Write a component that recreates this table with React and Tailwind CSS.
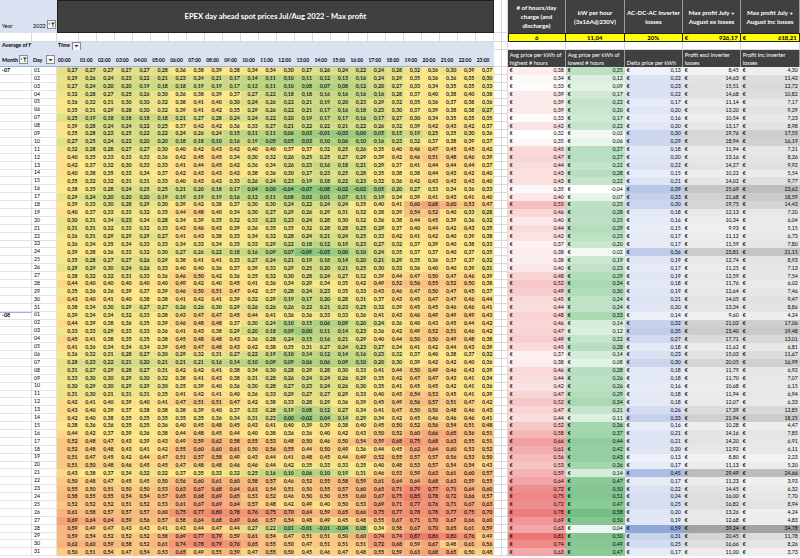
import React from 'react';

// hourly averages in euro cents, one line per day (Jul 01 .. Aug 31), 00:00 .. 23:00
const HOURS_RAW = `
27 27 27 27 27 28 36 38 39 38 34 34 30 27 26 24 22 24 28 32 36 30 39 37
29 26 24 23 22 21 23 24 21 17 14 11 10 11 12 13 16 24 29 35 36 36 35 30
27 24 20 20 19 18 18 19 19 17 13 11 10 8 7 8 12 20 27 33 34 35 35 33
32 28 27 25 26 30 36 38 39 37 27 22 18 18 16 16 16 16 28 37 40 38 40 38
36 32 31 30 30 32 38 41 40 30 24 26 22 21 19 20 23 29 32 35 36 37 38 36
35 31 29 28 30 32 39 41 42 35 29 26 22 21 17 16 18 23 30 37 39 38 38 27
25 19 18 18 18 18 21 27 28 24 24 22 20 19 17 17 16 17 27 30 34 35 35 35
39 28 24 24 22 25 37 42 42 36 33 27 21 22 22 21 22 26 32 39 42 43 42 37
35 28 23 25 22 22 24 26 24 15 11 11 6 3 -1 -3 0 5 15 19 25 35 30 36
27 25 24 22 20 20 18 18 10 16 19 5 5 3 10 6 10 16 23 32 37 38 39 37
32 28 28 27 27 30 40 42 43 42 40 40 37 37 32 25 26 35 40 46 47 45 45 42
40 35 33 33 33 36 42 45 45 34 30 32 26 25 25 27 29 39 42 46 51 48 46 39
42 37 32 30 33 33 41 44 45 42 36 34 26 23 16 18 21 29 37 41 44 44 44 37
40 38 35 33 34 37 42 43 43 42 38 36 30 27 23 25 28 35 38 38 44 43 42 40
35 32 32 31 31 33 40 43 42 33 26 24 23 19 18 22 23 32 36 42 43 43 43 40
38 35 28 24 25 25 21 20 18 17 4 0 -4 -7 -8 -2 -2 5 20 27 33 34 36 33
29 24 20 20 20 19 19 19 19 16 12 11 8 3 1 7 11 19 34 39 41 43 41 40
39 33 30 28 29 30 39 42 38 37 30 30 24 22 24 24 35 40 41 60 68 60 53 47
40 37 33 33 32 35 44 48 40 34 30 27 29 26 29 31 32 38 39 54 52 40 33 28
30 31 34 23 34 28 34 39 35 32 33 23 23 24 28 30 32 36 38 44 45 39 36 32
31 31 32 33 32 33 43 46 43 39 36 35 35 32 28 28 25 29 37 40 44 42 43 35
36 31 29 29 29 27 41 43 38 33 34 32 28 24 21 24 25 33 42 41 42 40 39 38
36 34 35 34 33 33 34 33 34 35 33 29 22 18 12 19 23 27 32 37 39 40 38 33
39 38 36 33 32 30 27 26 22 18 16 9 7 -9 -5 0 10 24 35 37 37 40 37 35
35 28 27 27 26 29 38 41 41 33 27 24 21 19 18 14 20 21 29 35 36 37 37 32
29 29 30 24 26 33 40 40 36 37 39 33 29 25 20 21 25 30 33 36 40 40 39 31
38 32 32 31 33 36 46 50 42 36 35 32 30 28 24 27 32 39 44 47 50 47 46 39
44 40 40 40 40 40 49 42 40 45 41 36 34 29 34 35 42 49 52 56 55 52 50 38
35 36 36 39 37 39 46 50 51 47 42 37 28 24 23 35 33 43 46 47 50 47 45 37
43 40 41 40 38 38 41 42 41 39 32 29 19 17 20 28 31 37 43 45 47 47 46 44
38 34 30 29 27 27 26 26 30 29 26 26 26 22 21 23 25 32 39 45 45 46 46 41
39 34 34 32 33 38 43 47 47 45 44 41 36 36 33 33 36 41 43 46 49 49 49 43
44 39 38 36 35 39 46 48 48 37 30 24 10 15 6 9 20 24 36 40 43 45 44 42
33 33 29 33 33 36 41 43 38 29 20 18 9 0 11 14 23 36 42 49 52 51 46 42
45 41 38 35 35 38 45 48 48 43 36 28 24 15 16 21 29 40 44 50 50 49 48 38
41 36 34 34 34 39 45 47 48 43 42 38 35 31 27 24 23 27 34 41 42 44 43 39
36 32 31 28 27 30 29 32 31 27 22 19 10 14 12 14 16 23 32 37 40 38 37 32
28 23 22 21 20 21 21 21 16 14 10 9 9 6 6 9 10 20 30 39 42 42 40 36
31 27 29 28 27 31 42 42 41 38 34 30 28 29 28 30 33 41 44 50 49 46 43 39
33 30 30 29 30 32 38 41 43 38 31 28 26 24 24 26 29 35 42 47 47 43 41 34
30 29 30 29 29 30 35 39 40 36 30 28 27 23 24 26 30 35 41 45 45 42 41 36
31 30 31 31 31 35 41 42 41 40 36 33 29 27 27 29 33 40 45 54 53 45 41 39
42 41 40 39 40 41 47 51 51 47 42 38 33 28 29 36 39 45 49 56 57 51 47 42
43 40 39 37 38 38 38 39 40 37 33 28 19 8 12 27 34 41 47 50 50 48 46 43
42 40 38 35 35 35 35 35 36 34 31 23 0 -2 4 14 29 34 42 45 46 46 46 41
38 36 36 35 35 36 40 45 48 45 43 41 40 39 39 38 40 45 50 52 56 54 51 48
44 42 37 39 36 38 44 48 45 44 40 38 36 36 40 42 43 50 52 60 66 65 56 51
52 48 47 43 39 43 49 59 62 58 55 53 48 50 46 50 54 59 68 75 68 63 55 51
52 48 48 43 41 42 55 60 60 61 50 56 55 44 50 49 36 44 45 62 64 60 53 52
51 47 45 42 44 47 51 57 58 49 43 44 41 48 45 44 49 52 55 57 57 56 53 50
51 50 48 46 45 45 47 48 48 46 46 44 42 35 33 33 35 40 48 53 57 54 54 43
43 38 37 34 32 32 37 35 33 32 25 16 10 6 10 19 31 46 53 59 63 61 60 57
50 48 47 45 45 50 56 60 61 60 58 57 46 52 55 58 59 61 64 64 68 63 59 55
55 50 51 50 50 53 63 67 68 64 61 54 51 50 55 57 60 65 71 79 77 71 64 60
58 55 55 54 54 57 65 68 69 65 53 52 46 50 50 55 60 67 75 85 78 72 66 57
52 52 52 51 52 53 61 67 69 64 57 48 42 49 40 50 53 69 71 77 76 71 67 63
61 58 57 57 57 60 75 77 80 78 76 75 70 64 59 65 66 75 77 78 78 77 75 70
69 64 64 59 56 57 58 64 68 69 66 57 54 48 49 45 48 55 67 71 70 67 66 60
59 49 47 43 43 41 43 44 47 44 27 22 1 -1 -1 -4 8 34 58 67 70 65 61 59
59 54 52 52 52 58 69 77 79 59 61 54 47 51 51 50 60 74 74 87 86 80 76 49
62 60 59 58 52 61 74 78 79 76 65 55 50 47 51 51 51 72 68 59 67 48 61 56
50 51 54 47 54 53 65 49 55 59 47 55 50 45 46 47 48 55 59 63 68 65 50 48
`;

// avg highest, avg lowest, delta, profit excl losses, profit inc losses
const RIGHT_RAW = `
0,38 0,25 0,13 8,45 4,30
0,34 0,12 0,22 14,63 11,42
0,33 0,09 0,23 15,51 12,72
0,39 0,17 0,22 14,68 10,82
0,39 0,22 0,17 11,14 7,17
0,39 0,20 0,20 13,20 9,29
0,33 0,17 0,16 10,54 7,23
0,42 0,22 0,20 13,17 8,98
0,32 0,02 0,30 19,76 17,55
0,35 0,06 0,29 18,94 16,19
0,45 0,27 0,18 11,94 7,21
0,47 0,27 0,20 13,16 8,26
0,44 0,22 0,22 14,27 9,92
0,43 0,28 0,15 10,22 5,54
0,43 0,22 0,21 14,02 9,77
0,35 -0,04 0,39 25,69 23,62
0,40 0,07 0,33 21,68 18,59
0,55 0,25 0,30 19,75 14,43
0,46 0,28 0,18 12,13 7,20
0,40 0,25 0,16 10,34 6,04
0,44 0,29 0,15 9,93 5,15
0,42 0,25 0,17 11,12 6,73
0,37 0,20 0,17 11,59 7,80
0,38 0,02 0,36 23,81 21,15
0,38 0,19 0,19 12,74 8,93
0,40 0,23 0,17 11,25 7,13
0,48 0,29 0,19 12,59 7,54
0,52 0,34 0,18 11,76 6,02
0,49 0,30 0,19 12,64 7,46
0,45 0,24 0,21 14,05 9,47
0,44 0,24 0,20 13,34 8,86
0,48 0,33 0,14 9,60 4,24
0,46 0,14 0,32 21,02 17,06
0,47 0,12 0,35 23,40 19,48
0,49 0,22 0,27 17,71 13,01
0,45 0,28 0,18 11,62 6,81
0,37 0,14 0,23 15,03 11,67
0,38 0,08 0,30 20,05 16,99
0,46 0,28 0,18 11,79 6,92
0,44 0,26 0,18 11,70 7,07
0,42 0,26 0,16 10,68 6,15
0,47 0,29 0,18 11,94 6,94
0,52 0,34 0,18 12,07 6,33
0,47 0,21 0,26 17,39 12,85
0,44 0,11 0,33 21,94 18,25
0,52 0,36 0,16 10,28 4,47
0,58 0,37 0,21 14,16 7,85
0,66 0,44 0,21 14,20 6,91
0,61 0,42 0,20 12,92 6,11
0,56 0,43 0,13 8,80 2,23
0,53 0,36 0,17 11,13 5,20
0,59 0,14 0,45 29,49 24,66
0,64 0,47 0,17 11,23 3,93
0,72 0,50 0,22 14,45 6,32
0,75 0,51 0,24 16,00 7,70
0,72 0,47 0,25 16,82 8,94
0,78 0,58 0,20 13,26 4,24
0,69 0,50 0,19 12,68 4,83
0,63 0,04 0,59 39,24 34,78
0,81 0,50 0,31 20,45 11,78
0,74 0,49 0,25 16,66 8,26
0,63 0,47 0,17 11,00 3,73
`;

const HOURS = HOURS_RAW.trim().split('\n').map((l) => l.trim().split(/\s+/).map(Number));
const RIGHT = RIGHT_RAW.trim().split('\n').map((l) => l.trim().split(/\s+/));

const fmtCents = (v) => (v < 0 ? '-' : '') + '0,' + String(Math.abs(v)).padStart(2, '0');
const num = (s) => parseFloat(s.replace(',', '.'));

const rgb = (h) => [1, 3, 5].map((i) => parseInt(h.slice(i, i + 2), 16));
const mix = (a, b, t) => {
  const k = Math.max(0, Math.min(1, t));
  const A = rgb(a);
  const B = rgb(b);
  return `rgb(${A.map((x, i) => Math.round(x + (B[i] - x) * k)).join(',')})`;
};

// 3-colour scale: green - yellow (50th percentile) - red, a bit washed out like the screenshot
const sorted = HOURS.flat().sort((a, b) => a - b);
const hMin = sorted[0];
const hMax = sorted[sorted.length - 1];
const pos = (sorted.length - 1) / 2;
const hMid = sorted[Math.floor(pos)] + (sorted[Math.ceil(pos)] - sorted[Math.floor(pos)]) * (pos - Math.floor(pos));
const hourColor = (v) =>
  v <= hMid ? mix('#86c47d', '#fde88c', (v - hMin) / (hMid - hMin)) : mix('#fde88c', '#ee7b70', (v - hMid) / (hMax - hMid));

const SCALES = [
  ['#ffffff', '#ec7576'],
  ['#ffffff', '#73bf82'],
  ['#eef1f9', '#8fa8da'],
  ['#f3f3f3', '#a3a3a3'],
  ['#f3f3f3', '#a3a3a3'],
];
const ranges = SCALES.map((_, c) => {
  const vals = RIGHT.map((r) => num(r[c]));
  return [Math.min(...vals), Math.max(...vals)];
});
const rightColor = (c, s) => {
  const [lo, hi] = ranges[c];
  return mix(SCALES[c][0], SCALES[c][1], (num(s) - lo) / (hi - lo));
};

const HOUR_W = (i) => (i === 0 ? 'w-[22px]' : 'w-[18.04px]');
const RIGHT_W = ['w-[58px]', 'w-[59px]', 'w-[58px]', 'w-[58px]', 'w-[59px]'];

const FilterButton = ({ funnel = false }) => (
  <div className="w-[9px] h-[9px] border border-[#8c8c8c] bg-[#f4f4f4] flex items-center justify-center shrink-0">
    <svg width="7" height="6" viewBox="0 0 7 6">
      {funnel ? (
        <>
          <path d="M0.3 1.5 L2.3 1.5 L1.3 2.7 Z" fill="#333" />
          <path d="M3 0.6 L6.8 0.6 L5.3 2.6 L5.3 5.4 L4.5 4.8 L4.5 2.6 Z" fill="#333" />
        </>
      ) : (
        <path d="M1.5 2 L5.5 2 L3.5 4.3 Z" fill="#333" />
      )}
    </svg>
  </div>
);

const GapCells = ({ h = '' }) => (
  <>
    <div className={`w-[8px] border-r border-b border-[#dadada] ${h}`} />
    <div className={`w-[6px] border-r border-b border-[#dadada] ${h}`} />
  </>
);

const TOP_HEADERS = [
  ['# of hours/day', 'charge (and', 'discharge)'],
  ['kW per hour', '(3x16A@230V)'],
  ['AC-DC-AC inverter', 'losses'],
  ['Max profit July +', 'August ex losses'],
  ['Max profit July +', 'August inc losses'],
];

const SUB_HEADERS = [
  ['Avg price per kWh of', 'highest # hours'],
  ['Avg price per kWh of', 'lowest # hours'],
  ['Delta price per kWh'],
  ['Profit excl inverter', 'losses'],
  ['Profit inc inverter', 'losses'],
];

export default function App() {
  return (
    <div className="w-[800px] h-[558px] overflow-hidden bg-white text-black font-['Lato','Liberation_Sans',sans-serif]">
      {/* row 1: page filter + titles */}
      <div className="flex h-[33px]">
        <div className="w-[57px] bg-[#dae1f1] flex items-end pb-[4px] text-[5.5px] leading-none">
          <div className="w-[32px] pl-[2px]">Year</div>
          <div className="w-[25px] flex items-end gap-[1px] pl-[1px]">
            <span>2022</span>
            <FilterButton funnel />
          </div>
        </div>
        <div className="w-[437px] bg-[#404040] border border-[#1f1f1f] flex items-center justify-center text-white font-bold text-[7.6px]">
          EPEX day ahead spot prices Jul/Aug 2022 - Max profit
        </div>
        <GapCells />
        {TOP_HEADERS.map((lines, c) => (
          <div
            key={c}
            className={`${RIGHT_W[c]} bg-[#404040] border-r border-[#9a9a9a] flex flex-col items-center justify-center text-white font-bold text-[6.2px] leading-[9px]`}
          >
            {lines.map((t) => (
              <span key={t} className="whitespace-nowrap">{t}</span>
            ))}
          </div>
        ))}
      </div>

      {/* row 2: blank row + input values */}
      <div className="flex h-[9px]">
        <div className="w-[32px] border-r border-b border-[#dadada]" />
        <div className="w-[25px] border-r border-b border-[#dadada]" />
        {HOURS[0].map((_, i) => (
          <div key={i} className={`${HOUR_W(i)} border-r border-b border-[#dadada]`} />
        ))}
        <GapCells />
        <div className="w-[58px] bg-[#ffff00] border border-[#1f1f1f] flex items-center justify-center font-bold text-[6px]">6</div>
        <div className="w-[59px] bg-[#ffff00] border-y border-r border-[#1f1f1f] flex items-center justify-center font-bold text-[6px]">11,04</div>
        <div className="w-[58px] bg-[#ffff00] border-y border-r border-[#1f1f1f] flex items-center justify-center font-bold text-[6px]">20%</div>
        <div className="w-[58px] bg-[#ffff00] border-y border-r border-[#1f1f1f] flex items-center justify-between px-[2px] font-bold text-[6px]">
          <span>€</span>
          <span>926,17</span>
        </div>
        <div className="w-[59px] bg-[#ffff00] border-y border-r border-[#1f1f1f] flex items-center justify-between px-[2px] font-bold text-[6px]">
          <span>€</span>
          <span>618,21</span>
        </div>
      </div>

      {/* row 3: pivot value label + column field */}
      <div className="flex h-[8px] text-[5.3px] leading-none">
        <div className="w-[57px] bg-[#dae1f1] flex items-center pl-[2px] font-bold">Average of F</div>
        <div className="w-[437px] bg-[#dae1f1] flex items-center pl-[1px] gap-[2px] font-bold">
          <span>Time</span>
          <FilterButton />
        </div>
        <GapCells />
        {RIGHT_W.map((w, c) => (
          <div key={c} className={`${w} border-r border-b border-[#dadada]`} />
        ))}
      </div>

      {/* row 4: row fields, hour labels, sub headers */}
      <div className="flex h-[17px] text-[5.3px] leading-none">
        <div className="w-[32px] bg-[#dae1f1] border-b border-[#9db2dc] flex items-end gap-[1px] pl-[2px] pb-[2px] font-bold">
          <span className="pb-[1px]">Month</span>
          <FilterButton funnel />
        </div>
        <div className="w-[25px] bg-[#dae1f1] border-b border-[#9db2dc] flex items-end gap-[4px] pl-[1px] pb-[2px] font-bold">
          <span className="pb-[1px]">Day</span>
          <FilterButton />
        </div>
        {HOURS[0].map((_, i) => (
          <div key={i} className={`${HOUR_W(i)} bg-[#dae1f1] border-b border-[#9db2dc] flex items-end pl-[1px] pb-[3px] font-bold text-[4.9px]`}>
            {String(i).padStart(2, '0')}:00
          </div>
        ))}
        <GapCells />
        {SUB_HEADERS.map((lines, c) => (
          <div
            key={c}
            className={`${RIGHT_W[c]} bg-[#404040] border-r border-[#9a9a9a] flex flex-col justify-end pl-[2px] pb-[1px] text-white text-[5.6px] leading-[7.5px]`}
          >
            {lines.map((t) => (
              <span key={t} className="whitespace-nowrap">{t}</span>
            ))}
          </div>
        ))}
      </div>

      {/* data rows */}
      {HOURS.map((row, r) => {
        const day = String((r % 31) + 1).padStart(2, '0');
        const first = r === 0 || r === 31;
        return (
          <div key={r} className="flex h-[7.9px] text-[5.2px] leading-none">
            <div
              className={`w-[32px] border-r border-b border-[#e2e2e2] flex items-center pl-[2px] font-bold ${r === 31 ? 'border-t border-t-[#9db2dc]' : ''}`}
            >
              {first ? (r === 0 ? '-07' : '-08') : ''}
            </div>
            <div className="w-[25px] border-r border-b border-[#e2e2e2] flex items-center pl-[2px]">{day}</div>
            {row.map((v, i) => (
              <div
                key={i}
                className={`${HOUR_W(i)} flex items-center justify-end pr-[1.5px] font-bold text-[#1a1a1a]`}
                style={{ backgroundColor: hourColor(v) }}
              >
                {fmtCents(v)}
              </div>
            ))}
            <GapCells />
            {RIGHT[r].map((s, c) => (
              <div
                key={c}
                className={`${RIGHT_W[c]} flex items-center justify-between px-[2px]`}
                style={{ backgroundColor: rightColor(c, s) }}
              >
                <span>€</span>
                <span>{s}</span>
              </div>
            ))}
          </div>
        );
      })}
    </div>
  );
}
